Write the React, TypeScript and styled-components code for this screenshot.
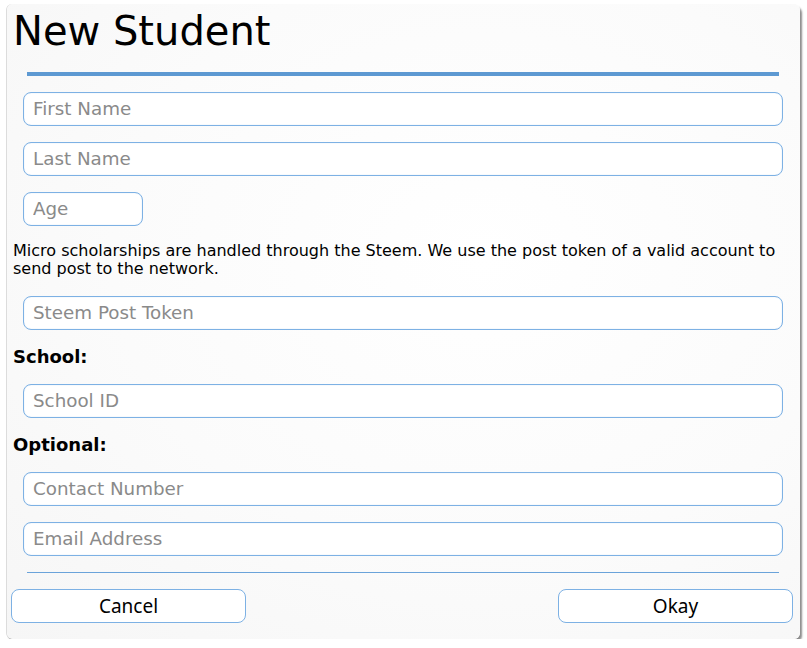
import React from 'react'
import styled, { createGlobalStyle } from 'styled-components'

const GlobalStyle = createGlobalStyle`
    html, body {
        margin: 0;
        padding: 0;
        background: #ffffff;
    }
    body {
        font-family: "DejaVu Sans", Verdana, sans-serif;
        color: #000;
    }
`

const Dialog = styled.div`
    box-sizing: border-box;
    margin: 4px 0 0 7px;
    width: 793px;
    height: 635px;
    padding: 4px 4px 0 4px;
    border-radius: 6px;
    background: radial-gradient(ellipse at 60% 40%, #ffffff 0%, #fbfbfb 55%, #f6f6f6 100%);
    box-shadow: 2px 3px 2px rgba(0, 0, 0, 0.45), -1px 0 0 #dcdcdc;
    display: flex;
    flex-direction: column;
`

const Title = styled.h1`
    margin: 0 0 0 2px;
    font-size: 40px;
    line-height: 46px;
    font-weight: normal;
`

const Rule = styled.hr<{ $thick?: boolean }>`
    border: none;
    margin: ${p => (p.$thick ? '18px' : '16px')} 17px 0 16px;
    height: ${p => (p.$thick ? '4px' : '1px')};
    background: ${p => (p.$thick ? '#5d99d2' : '#6aa3da')};
`

const Field = styled.input<{ $short?: boolean; $gap?: number }>`
    box-sizing: border-box;
    display: block;
    margin: ${p => p.$gap ?? 16}px 13px 0 12px;
    width: ${p => (p.$short ? '120px' : 'auto')};
    height: 34px;
    padding: 0 9px 2px 9px;
    border: 1px solid #7db1e4;
    border-radius: 8px;
    background: #ffffff;
    box-shadow: inset 0 0 1px rgba(125, 177, 228, 0.6);
    font-family: "DejaVu Sans", Verdana, sans-serif;
    font-size: 18.3px;
    color: #333;
    outline: none;

    &::placeholder {
        color: #8a8a8a;
    }
`

const Note = styled.p`
    margin: 16px 0 0 2px;
    font-size: 16px;
    line-height: 18px;
`

const Label = styled.h3`
    margin: 16px 0 0 2px;
    font-size: 18px;
    line-height: 21px;
    font-weight: bold;
`

const Footer = styled.div`
    display: flex;
    justify-content: space-between;
    margin-top: 16px;
    padding-right: 3px;
`

const Button = styled.button`
    box-sizing: border-box;
    width: 235px;
    height: 34px;
    border: 1px solid #7db1e4;
    border-radius: 8px;
    background: #ffffff;
    font-family: "Noto Sans", "Open Sans", sans-serif;
    font-size: 19px;
    color: #000;
    cursor: pointer;
    padding: 0;
`

function NewStudent() {
    return (
        <Dialog>
            <Title>New Student</Title>
            <Rule $thick />
            <Field placeholder="First Name" />
            <Field placeholder="Last Name" />
            <Field placeholder="Age" $short />
            <Note>
                Micro scholarships are handled through the Steem. We use the post token of a valid account to
                send post to the network.
            </Note>
            <Field placeholder="Steem Post Token" $gap={18} />
            <Label>School:</Label>
            <Field placeholder="School ID" $gap={17} />
            <Label>Optional:</Label>
            <Field placeholder="Contact Number" $gap={17} />
            <Field placeholder="Email Address" />
            <Rule />
            <Footer>
                <Button>Cancel</Button>
                <Button>Okay</Button>
            </Footer>
        </Dialog>
    )
}

export default function App() {
    return (
        <>
            <GlobalStyle />
            <NewStudent />
        </>
    )
}
